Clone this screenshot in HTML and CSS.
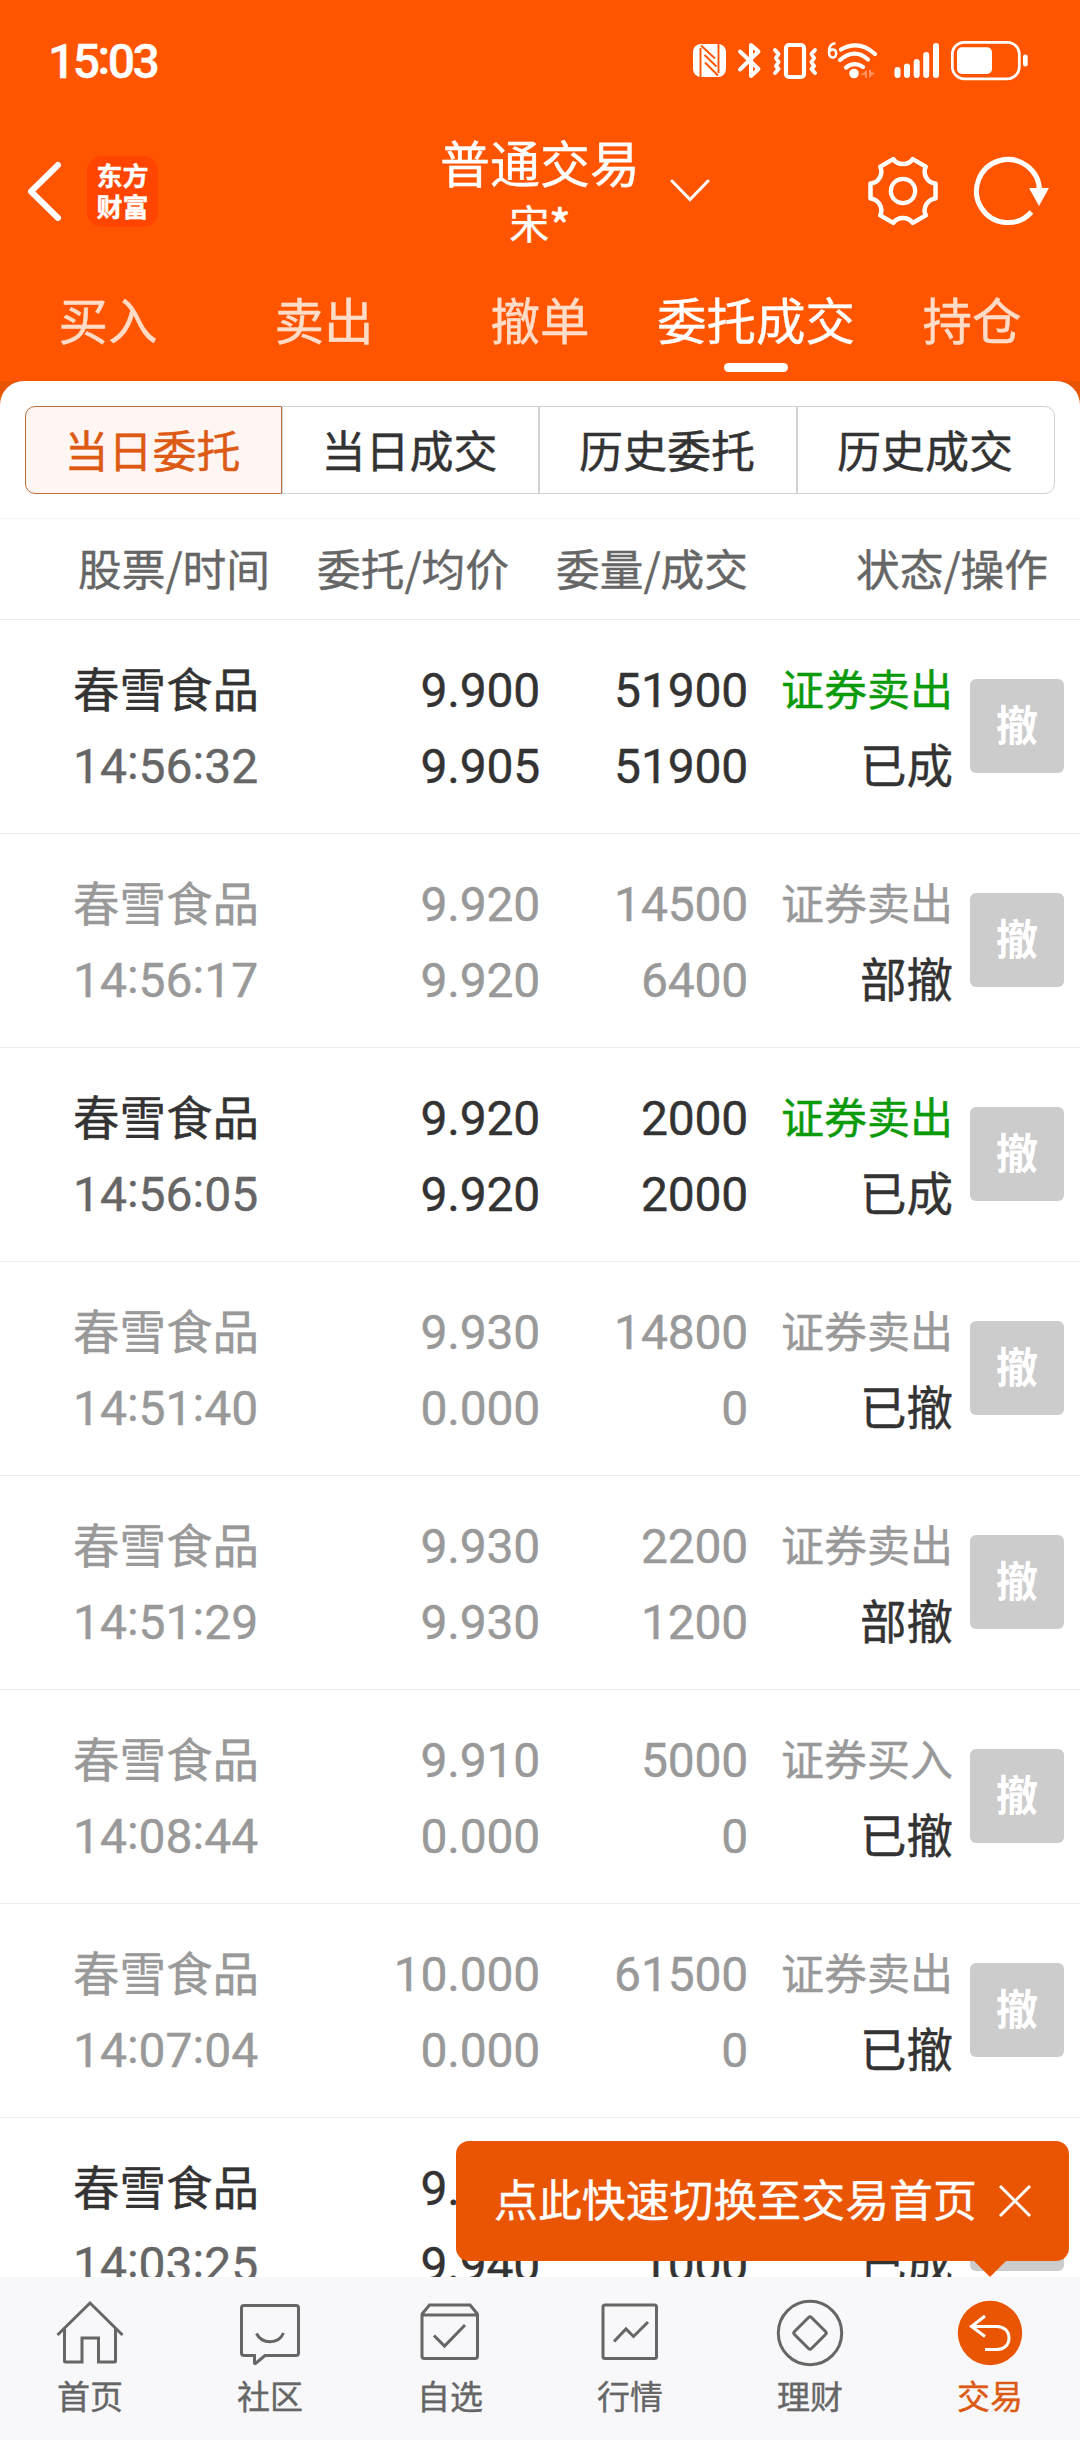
FILE: index.html
```html
<!DOCTYPE html>
<html lang="zh-CN">
<head>
<meta charset="utf-8">
<title>普通交易</title>
<link rel="stylesheet" href="styles.css">
</head>
<body>
<div class="app">
  <header class="header">
    <div class="status-bar">
      <span class="clock">15<i class="colon">:</i>03</span>
      <div class="status-icons">
        <svg width="40" height="48" viewBox="692 36 40 48"><rect x="693" y="44" width="33" height="33" rx="8" fill="#fff"/><path d="M700.500 48V77M718.500 44V73M701 45.500L715 58.500M704.500 55L716.500 66.500M705 62.500L718 75.500" fill="none" stroke="#f50" stroke-width="1.900"/></svg>
        <svg width="36" height="48" viewBox="732 36 36 48"><path d="M740 51.500L758.500 69L751 76V45L758.500 51.500L740 69.500" fill="none" stroke="#fff" stroke-width="4" stroke-linejoin="round" stroke-linecap="round"/></svg>
        <svg width="54" height="48" viewBox="768 36 54 48"><rect x="786" y="45" width="18" height="32" rx="3" fill="none" stroke="#fff" stroke-width="4.200"/><path d="M775 50L778.500 54L776 58L778.500 62L776 66L778.500 69L775 73M815 50L811.500 54L814 58L811.500 62L814 66L811.500 69L815 73" fill="none" stroke="#fff" stroke-width="4" stroke-linejoin="round" stroke-linecap="round"/></svg>
        <svg width="70" height="48" viewBox="822 36 70 48"><path d="M835.500 43.200C831 43.500 829 47 829 51.500C829 59.500 836.200 59 836.200 53.300C836.200 48.500 830.500 48.500 829.200 52" fill="none" stroke="#fff" stroke-width="2.500"/><path d="M841 49.500Q859 39.500 875 54M840 60Q854.500 47.500 868 59.500M846 67.500Q854 61 863 67" fill="none" stroke="#fff" stroke-width="4.200" stroke-linecap="round"/><circle cx="854" cy="73.500" r="4.800" fill="#fff"/><path d="M860 75L867 70V78H865V75ZM869 70H871V72L875 73L869 78Z" fill="#fff" opacity=".35"/></svg>
        <svg width="54" height="48" viewBox="892 36 54 48"><path d="M897.500 70V75M907 66.500V75M916.700 62V75M926.200 55V75M936 46V75" stroke="#fff" stroke-width="6" stroke-linecap="round"/></svg>
        <svg width="86" height="48" viewBox="946 36 86 48"><rect x="952.300" y="42.300" width="67" height="36.500" rx="12" fill="none" stroke="#fff" stroke-width="2.700"/><rect x="957" y="47.300" width="35" height="26.700" rx="5" fill="#fff"/><rect x="1023" y="54.500" width="4.700" height="12" rx="2.300" fill="#fff"/></svg>
      </div>
    </div>

    <div class="title-bar">
      <div class="title-left">
        <svg class="back" width="36" height="60" viewBox="0 0 36 60"><path d="M31 4L4 30.500L31 57" fill="none" stroke="#fff" stroke-width="6" stroke-linecap="round" stroke-linejoin="round"/></svg>
        <div class="logo"><span>东方</span><span>财富</span></div>
      </div>
      <div class="title">
        <h1>普通交易</h1>
        <p>宋<i class="mask">*</i></p>
      </div>
      <div class="title-right">
        <svg class="chevron" width="40" height="24" viewBox="0 0 40 24"><path d="M2 2L20 20.500L38 2" fill="none" stroke="#fff" stroke-width="3" stroke-linecap="round"/></svg>
        <svg class="gear" width="72" height="72" viewBox="-36 -36 72 72"><path d="M32.500 -7.500V7.500A12 12 0 0 0 22.750 24.400L9.750 31.900A12 12 0 0 0 -9.750 31.900L-22.750 24.400A12 12 0 0 0 -32.500 7.500V-7.500A12 12 0 0 0 -22.750 -24.400L-9.750 -31.900A12 12 0 0 0 9.750 -31.900L22.750 -24.400A12 12 0 0 0 32.500 -7.500Z" fill="none" stroke="#fff" stroke-width="4.500" stroke-linejoin="round"/><circle r="12.200" fill="none" stroke="#fff" stroke-width="4.200"/></svg>
        <svg class="refresh" width="78" height="72" viewBox="-36 -36 78 72"><path d="M23.500 21A31.500 31.500 0 1 1 31.500 0" fill="none" stroke="#fff" stroke-width="5"/><path d="M21 -3H41L31 15Z" fill="#fff"/></svg>
      </div>
    </div>

    <nav class="tabs">
      <a>买入</a><a>卖出</a><a>撤单</a><a class="active">委托成交</a><a>持仓</a>
    </nav>
  </header>

  <main class="panel-back">
    <div class="panel">
      <div class="segments">
        <button class="on">当日委托</button><button>当日成交</button><button>历史委托</button><button>历史成交</button>
      </div>
      <div class="thead"><span>股票/时间</span><span>委托/均价</span><span>委量/成交</span><span>状态/操作</span></div>

      <section class="orders">
        <article class="row">
          <div class="stock"><b>春雪食品</b><time>14<i class="colon">:</i>56<i class="colon">:</i>32</time></div>
          <div class="num"><span>9.900</span><span>9.905</span></div>
          <div class="num"><span>51900</span><span>51900</span></div>
          <div class="state"><span class="side">证券卖出</span><span>已成</span></div>
          <button class="cancel">撤</button>
        </article>
        <article class="row muted">
          <div class="stock"><b>春雪食品</b><time>14<i class="colon">:</i>56<i class="colon">:</i>17</time></div>
          <div class="num"><span>9.920</span><span>9.920</span></div>
          <div class="num"><span>14500</span><span>6400</span></div>
          <div class="state"><span class="side">证券卖出</span><span>部撤</span></div>
          <button class="cancel">撤</button>
        </article>
        <article class="row">
          <div class="stock"><b>春雪食品</b><time>14<i class="colon">:</i>56<i class="colon">:</i>05</time></div>
          <div class="num"><span>9.920</span><span>9.920</span></div>
          <div class="num"><span>2000</span><span>2000</span></div>
          <div class="state"><span class="side">证券卖出</span><span>已成</span></div>
          <button class="cancel">撤</button>
        </article>
        <article class="row muted">
          <div class="stock"><b>春雪食品</b><time>14<i class="colon">:</i>51<i class="colon">:</i>40</time></div>
          <div class="num"><span>9.930</span><span>0.000</span></div>
          <div class="num"><span>14800</span><span>0</span></div>
          <div class="state"><span class="side">证券卖出</span><span>已撤</span></div>
          <button class="cancel">撤</button>
        </article>
        <article class="row muted">
          <div class="stock"><b>春雪食品</b><time>14<i class="colon">:</i>51<i class="colon">:</i>29</time></div>
          <div class="num"><span>9.930</span><span>9.930</span></div>
          <div class="num"><span>2200</span><span>1200</span></div>
          <div class="state"><span class="side">证券卖出</span><span>部撤</span></div>
          <button class="cancel">撤</button>
        </article>
        <article class="row muted">
          <div class="stock"><b>春雪食品</b><time>14<i class="colon">:</i>08<i class="colon">:</i>44</time></div>
          <div class="num"><span>9.910</span><span>0.000</span></div>
          <div class="num"><span>5000</span><span>0</span></div>
          <div class="state"><span class="side">证券买入</span><span>已撤</span></div>
          <button class="cancel">撤</button>
        </article>
        <article class="row muted">
          <div class="stock"><b>春雪食品</b><time>14<i class="colon">:</i>07<i class="colon">:</i>04</time></div>
          <div class="num"><span>10.000</span><span>0.000</span></div>
          <div class="num"><span>61500</span><span>0</span></div>
          <div class="state"><span class="side">证券卖出</span><span>已撤</span></div>
          <button class="cancel">撤</button>
        </article>
        <article class="row">
          <div class="stock"><b>春雪食品</b><time>14<i class="colon">:</i>03<i class="colon">:</i>25</time></div>
          <div class="num"><span>9.940</span><span>9.940</span></div>
          <div class="num"><span>1000</span><span>1000</span></div>
          <div class="state"><span class="side">证券卖出</span><span>已成</span></div>
          <button class="cancel">撤</button>
        </article>
      </section>
    </div>
  </main>

  <footer class="bottom-nav">
    <a>
      <svg width="72" height="72" viewBox="0 0 72 72"><path d="M3.500 39L36 7L68.500 39M10.500 33V65Q10.500 66 11.500 66H28V42H44.500V66H60.500Q61.500 66 61.500 65V33"/></svg>
      首页
    </a>
    <a>
      <svg width="72" height="72" viewBox="0 0 72 72"><path d="M9.500 9.500H62Q64.500 9.500 64.500 12V57Q64.500 59.500 62 59.500H31L21.500 67.500Q20.500 68 20.500 66.500V59.500H10Q7.500 59.500 7.500 57V12Q7.500 9.500 10 9.500ZM22.500 37.500C28 48.500 44.500 48.500 49.500 37"/></svg>
      社区
    </a>
    <a>
      <svg width="72" height="72" viewBox="0 0 72 72"><path d="M8 18L15.500 9H56L63.500 18M8 19H63.500V60Q63.500 62.500 61 62.500H10.500Q8 62.500 8 60ZM20 39.500L30.500 50L51 29"/></svg>
      自选
    </a>
    <a>
      <svg width="72" height="72" viewBox="0 0 72 72"><rect x="9" y="9" width="53.500" height="53.500" rx="2"/><path d="M20 45.500L32 33L39.500 40.500L54 26"/></svg>
      行情
    </a>
    <a>
      <svg width="72" height="72" viewBox="0 0 72 72"><circle cx="36" cy="37" r="31.700"/><path d="M34.500 21.500Q36 20 37.500 21.500L51.500 35.500Q53 37 51.500 38.500L37.500 52.500Q36 54 34.500 52.500L20.500 38.500Q19 37 20.500 35.500Z"/></svg>
      理财
    </a>
    <a class="current">
      <svg width="72" height="72" viewBox="0 0 72 72"><circle class="disc" cx="36" cy="37" r="32.200"/><path class="glyph" d="M31 20L17.500 30.500L31 40.500M18 30.500H43C50 30.500 55 35 55 42C55 49 50 53.500 43 53.500H31"/></svg>
      交易
    </a>
    <div class="tip">
      <span>点此快速切换至交易首页</span>
      <svg width="34" height="34" viewBox="0 0 34 34"><path d="M2 2L32 32M32 2L2 32" stroke="#fff" stroke-width="3"/></svg>
    </div>
  </footer>
</div>
</body>
</html>
```
FILE: styles.css
```css
* { box-sizing: border-box; margin: 0; padding: 0; }

body {
  background: #fff;
  font-family: "Noto Sans CJK SC", sans-serif;
  color: #333;
  -webkit-text-stroke: .4px;
}

svg { display: block; flex: none; }

button { border: 0; background: none; font: inherit; color: inherit; }

.app {
  width: 1080px;
  height: 2440px;
  display: flex;
  flex-direction: column;
  overflow: hidden;
}

.colon { font-style: normal; vertical-align: 4px; line-height: 0; }

/* Header */
.header { height: 381px; flex: none; background: #f50; color: #fff; }

.status-bar {
  height: 120px;
  padding: 0 48px 0 48px;
  display: flex;
  justify-content: space-between;
}

.clock {
  font: 500 48px/124px Roboto, sans-serif;
  letter-spacing: -2.500px;
}

.status-icons { display: flex; padding-top: 36px; }

.title-bar {
  height: 140px;
  display: grid;
  grid-template-columns: 1fr 230px 1fr;
}

.title-left { display: flex; align-items: flex-start; padding-left: 27px; }
.back { margin-top: 41px; }

.logo {
  width: 71px;
  height: 71px;
  margin: 36px 0 0 24px;
  padding-top: 3px;
  border-radius: 15px;
  background: #ff4500;
  display: flex;
  flex-direction: column;
  align-items: center;
  font-size: 26px;
  font-weight: 700;
  line-height: 31px;
}

.title { text-align: center; }
.title h1 { font-size: 50px; font-weight: 400; line-height: 60px; margin-top: 11px; white-space: nowrap; }
.title p { font-size: 40px; line-height: 44px; margin-top: 9px; }
.mask { font-style: normal; font-weight: 500; font-size: 44px; line-height: 0; vertical-align: -3px; }

.title-right { display: flex; align-items: flex-start; }
.chevron { margin: 59px 0 0 15px; }
.gear { margin: 35px 0 0 157px; }
.refresh { margin: 35px 0 0 33px; }

.tabs { display: grid; grid-template-columns: repeat(5, 1fr); height: 121px; }
.tabs a {
  display: flex;
  flex-direction: column;
  align-items: center;
  font-size: 49.500px;
  line-height: 72px;
  padding-top: 23px;
  color: #ffdcc8;
  white-space: nowrap;
}
.tabs .active { color: #fff; }
.tabs .active::after {
  content: "";
  width: 64px;
  height: 9px;
  margin-top: 8px;
  border-radius: 5px;
  background: #fff;
}

/* Order panel */
.panel-back { flex: 1; min-height: 0; background: #e85500; }
.panel { height: 100%; overflow: hidden; border-radius: 24px 24px 0 0; background: #fff; }

.segments {
  display: grid;
  grid-template-columns: 257px 257px 258px 258px;
  width: 1030px;
  height: 88px;
  margin: 25px 25px 24px;
}
.segments button {
  border: 1px solid #d0d3d3;
  padding: 0 2px 2px 0;
  font-size: 44px;
  line-height: 80px;
}
.segments button:first-child { border-radius: 10px 0 0 10px; }
.segments button:last-child { border-radius: 0 10px 10px 0; }
.segments .on { border-color: #b8703f; background: #fff6f3; color: #dc5a14; }

.thead {
  height: 102px;
  border-top: 1px solid #f6f6f6;
  border-bottom: 1px solid #ececec;
  display: grid;
  grid-template-columns: 270px 239px 239px 300px;
  text-align: right;
  font-size: 43.700px;
  line-height: 97px;
  color: #666;
}

.row {
  height: 214px;
  padding: 33px 16px 0 73px;
  border-bottom: 1px solid #ececec;
  display: grid;
  grid-template-columns: 200px 267px 208px 205px 94px;
  column-gap: 0;
  font-family: Roboto, "Noto Sans CJK SC", sans-serif;
  font-size: 48px;
  line-height: 76px;
}
.row > div { display: flex; flex-direction: column; white-space: nowrap; }
.stock b { font-size: 46.500px; font-weight: 400; }
.stock time { color: #666; }
.num, .state { align-items: flex-end; }
.num { letter-spacing: -.2px; }
.state { font-size: 46.500px; }
.state .side { font-size: 43px; color: #0a9a0a; }
.muted .stock, .muted .stock time, .muted .num, .muted .side { color: #999; }

.cancel {
  width: 94px;
  height: 94px;
  margin: 26px 0 0 17px;
  border-radius: 6px;
  background: #ccc;
  color: #fff;
  font-size: 42px;
  font-weight: 700;
  line-height: 96px;
  -webkit-text-stroke: 0;
}

/* Bottom navigation */
.bottom-nav {
  position: relative;
  height: 163px;
  flex: none;
  background: #f8f8fa;
  display: grid;
  grid-template-columns: repeat(6, 1fr);
}
.bottom-nav a {
  display: flex;
  flex-direction: column;
  align-items: center;
  padding-top: 19px;
  font-size: 33px;
  line-height: 55px;
  color: #666;
}
.bottom-nav a svg { fill: none; stroke: #666; stroke-width: 3; }
.bottom-nav .current { color: #dc5a14; }
.bottom-nav .disc { fill: #ea5504; stroke: none; }
.bottom-nav .glyph { stroke: #fff; }

.tip {
  position: absolute;
  left: 456px;
  top: -136px;
  width: 613px;
  height: 120px;
  padding: 0 37px 0 38px;
  border-radius: 13px;
  background: #ea5504;
  color: #fff;
  display: flex;
  align-items: center;
  justify-content: space-between;
  font-size: 43.900px;
  line-height: 112px;
  white-space: nowrap;
}
.tip span { padding-bottom: 6px; }
.tip::after {
  content: "";
  position: absolute;
  left: 518px;
  top: 120px;
  border: 16px solid transparent;
  border-top-color: #ea5504;
  border-bottom: 0;
}
```
